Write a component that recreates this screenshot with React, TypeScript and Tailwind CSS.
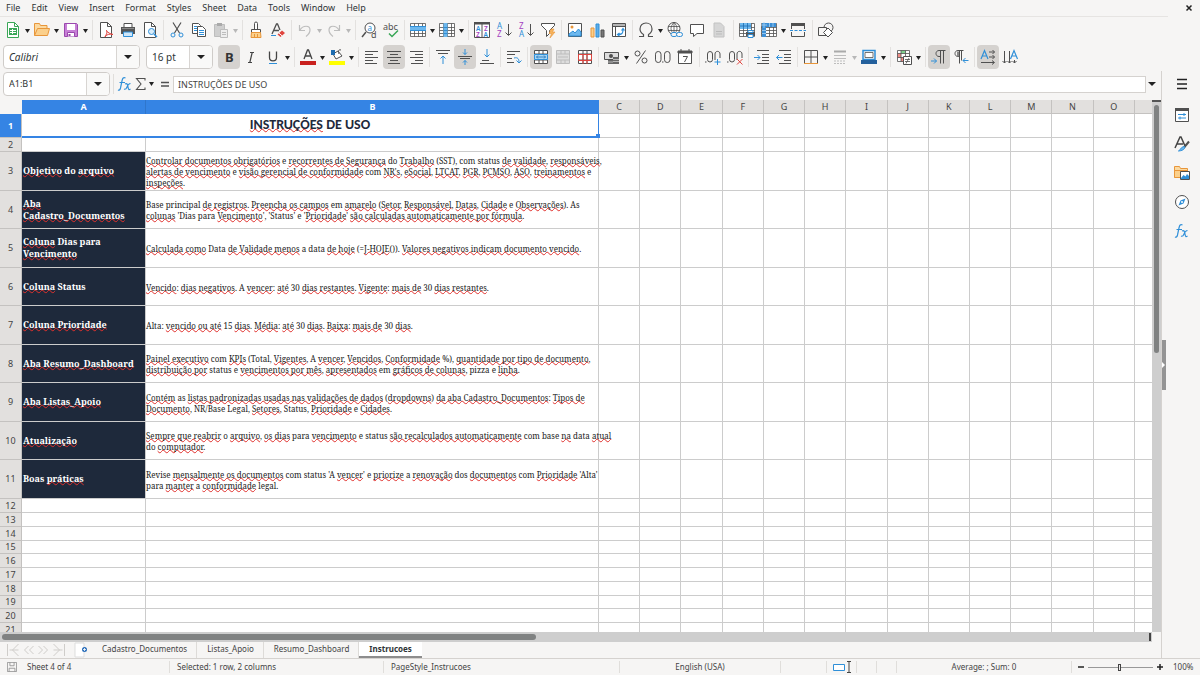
import { Fragment, useState } from "react";
import type { ReactNode } from "react";

const INK = "#505050";
const BLUE = "#2f8fd8";
const PALE = "#bdbdbd";
const ORANGE = "#e8963a";
const RED = "#e0453f";
const GREEN = "#3aa757";

const grid = "M.5 1.500h15v13H.5zM.5 5.500h15M.5 8.500h15M.5 11.500h15M4.500 1.500v13M8.500 1.500v13M12.500 1.500v13";

const ICONS: Record<string, ReactNode> = {
  new: (
    <>
      <path d="M2.500.5h7l4 4v11h-11z" fill="#fff" stroke={GREEN} />
      <path d="M9.500.5v4h4" fill="none" stroke={GREEN} />
      <path d="M4 6h8v7H4z" fill={GREEN} />
      <path d="M5 8.500h6M5 10.500h6M7.500 7v5" stroke="#fff" />
    </>
  ),
  open: (
    <>
      <path d="M.5 13.500v-12h5l1 2h6.500v3" fill="#fbd9a0" stroke={ORANGE} />
      <path d="M.5 13.500l3-7h12l-2 7z" fill="#fbd08c" stroke={ORANGE} />
    </>
  ),
  save: (
    <>
      <path d="M1.500 1.500h12l1 1v12h-13z" fill="#c77fd6" stroke="#9a48ad" />
      <path d="M4 2h8v6H4z" fill="#fff" />
      <path d="M4.500 14.500v-4h7v4" fill="#fff" stroke="#9a48ad" />
      <path d="M5.500 12h2v2h-2z" fill="#9a48ad" />
    </>
  ),
  pdf: (
    <>
      <path d="M2.500.5h7l4 4v11h-11z" fill="#fff" stroke={INK} />
      <path d="M9.500.5v4h4" fill="none" stroke={INK} />
      <path d="M8 8.500c2 0 1 3-1 6.500 1-2.500 5-3.500 8-2.500-3-.5-5-2-7-4z" fill="#fff" stroke={RED} />
    </>
  ),
  print: (
    <>
      <path d="M4 1.500h8v4H4z" fill="#fff" stroke={INK} />
      <path d="M1 5h14v7H1z" fill="#555" />
      <path d="M2 6.500h12" stroke="#8a8a8a" />
      <path d="M3.500 10h9v4.500h-9z" fill="#cfe6f8" stroke={BLUE} />
    </>
  ),
  preview: (
    <>
      <path d="M2.500.5h7l4 4v11h-11z" fill="#fff" stroke={INK} />
      <path d="M9.500.5v4h4" fill="none" stroke={INK} />
      <circle cx="9.500" cy="9.500" r="3" fill="#d8ecfa" stroke={BLUE} />
      <path d="M12 12l3 3" stroke={BLUE} strokeWidth="1.500" />
    </>
  ),
  cut: (
    <>
      <path d="M4 .5l6.500 10.500M12 .5L5.500 11" stroke={INK} fill="none" strokeWidth="1.200" />
      <circle cx="4" cy="13" r="2" fill="none" stroke={BLUE} />
      <circle cx="12" cy="13" r="2" fill="none" stroke={BLUE} />
    </>
  ),
  copy: (
    <>
      <path d="M1.500 1.500h6l2 2v8h-8z" fill="#fff" stroke={INK} />
      <path d="M6.500 4.500h5l3 3v7h-8z" fill="#fff" stroke={INK} />
      <path d="M3 4.500h3M3 6.500h3M3 8.500h3M8 8.500h5M8 10.500h5M8 12.500h5" stroke={BLUE} />
    </>
  ),
  paste: (
    <>
      <path d="M1.500 2.500h10v12h-10z" fill="#cfcfcf" stroke={PALE} />
      <path d="M4 1h5v3H4z" fill="#aaa" />
      <path d="M7.500 7.500h7v8h-7z" fill="#eee" stroke={PALE} />
      <path d="M9 10.500h4M9 12.500h4" stroke={PALE} />
    </>
  ),
  clone: (
    <>
      <path d="M6.500 1.500a1.500 1.500 0 013 0v6h-3z" fill="#fff" stroke={INK} />
      <path d="M3.500 7.500h9v3h-9z" fill="#fff" stroke={INK} />
      <path d="M3.500 10.500h9l.5 5H3z" fill="#fbd08c" stroke={ORANGE} />
      <path d="M6.500 12v3M9.500 12v3" stroke={ORANGE} />
    </>
  ),
  clear: (
    <>
      <path d="M2 12L6.500 2h1L10 8M4 8.500h5" fill="none" stroke={INK} strokeWidth="1.300" />
      <path d="M1 13.500h5" stroke={BLUE} />
      <path d="M7.500 12.500L12 8.500l3 2.500-4.500 4z" fill={RED} />
      <path d="M9 11.200l3 2.600" stroke="#fff" />
    </>
  ),
  undo: <path d="M2.500 3v5.500H8M3 8c3-5 10-5 10 0 0 3-2 5-4 6.500" fill="none" stroke={PALE} strokeWidth="1.200" />,
  redo: <path d="M13.500 3v5.500H8M13 8C10 3 3 3 3 8c0 3 2 5 4 6.500" fill="none" stroke={PALE} strokeWidth="1.200" />,
  find: (
    <>
      <circle cx="9" cy="6" r="5" fill="#fff" stroke={INK} />
      <path d="M5 10l-4 5" stroke={INK} strokeWidth="1.500" />
      <text x="6.500" y="8.500" fontSize="8" fill={BLUE} fontFamily="Noto Sans">a</text>
      <text x="10" y="15.500" fontSize="9" fill={INK} fontFamily="Noto Sans">d</text>
    </>
  ),
  spell: (
    <>
      <text x="0" y="8" fontSize="9" fill={INK} fontFamily="Noto Sans">abc</text>
      <path d="M6 11.500l3 3 6-6" fill="none" stroke={GREEN} strokeWidth="1.500" />
    </>
  ),
  row: (
    <>
      <path d={grid} fill="#fff" stroke={INK} strokeWidth=".8" />
      <path d="M0 4.500h16v4H0z" fill="#6db8ee" />
      <path d="M0 4.500h16M0 8.500h16" stroke={BLUE} />
    </>
  ),
  column: (
    <>
      <path d={grid} fill="#fff" stroke={INK} strokeWidth=".8" />
      <path d="M4.500 1h4v14h-4z" fill="#6db8ee" />
      <path d="M4.500 5.500h4M4.500 8.500h4M4.500 11.500h4" stroke={BLUE} />
    </>
  ),
  sort: (
    <>
      <path d="M.5.5h15v15H.5zM8 2v13" fill="#fff" stroke={INK} />
      <path d="M0 0h16v2.500H0z" fill={INK} />
      <g fontSize="6.500" fontFamily="Noto Sans" fontWeight="600">
        <text x="2" y="9" fill={BLUE}>A</text>
        <text x="2" y="15" fill="#a43fc0">Z</text>
        <text x="10" y="9" fill="#a43fc0">Z</text>
        <text x="9.500" y="15" fill={BLUE}>A</text>
      </g>
    </>
  ),
  asc: (
    <>
      <g fontSize="8" fontFamily="Noto Sans">
        <text x="1" y="7" fill={BLUE}>A</text>
        <text x="1" y="15" fill="#a43fc0">Z</text>
      </g>
      <path d="M12.500 2v11M9.500 10.500l3 3 3-3" fill="none" stroke={INK} />
    </>
  ),
  desc: (
    <>
      <g fontSize="8" fontFamily="Noto Sans">
        <text x="1" y="7" fill="#a43fc0">Z</text>
        <text x="1" y="15" fill={BLUE}>A</text>
      </g>
      <path d="M12.500 2v11M9.500 10.500l3 3 3-3" fill="none" stroke={INK} />
    </>
  ),
  filter: (
    <>
      <path d="M1.500 1.500h13v2l-5 5v3l-3 3v-6l-5-5z" fill="#fff" stroke={INK} />
      <path d="M11 7h3l-1.500 3H15l-5 6 1.500-4.500H9z" fill="#f7b35b" stroke={ORANGE} strokeWidth=".6" />
    </>
  ),
  image: (
    <>
      <path d="M1.500 1.500h13v13h-13z" fill="#fff" stroke={INK} />
      <circle cx="5" cy="5" r="1.500" fill={ORANGE} />
      <path d="M2 12l4-3 2 2 3.500-4L14 10v4H2z" fill="#6db8ee" stroke={BLUE} />
    </>
  ),
  chart: (
    <>
      <path d="M2 6h3v9H2z" fill="#fbd08c" stroke={ORANGE} />
      <path d="M7 2h3v13H7z" fill="#5faee8" stroke={BLUE} />
      <path d="M12 8h3v7h-3z" fill="#777" stroke={INK} />
    </>
  ),
  pivot: (
    <>
      <path d="M1.500 1.500h13v13h-13zM1.500 4.500h13M4.500 1.500v13" fill="#fff" stroke={INK} />
      <path d="M2 2h12v2H2z" fill="#b5b5b5" />
      <path d="M7 12.500c4 0 5-1 5-5M10.500 8.500l1.500-2 1.500 2M8.500 11L6.500 12.500l2 1.500" fill="none" stroke={BLUE} strokeWidth="1.200" />
    </>
  ),
  omega: <path d="M1 14.500h4.500v-2C3 11 2 9 2 7c0-3.500 2.500-6 6-6s6 2.500 6 6c0 2-1 4-3.500 5.500v2H15" fill="none" stroke={INK} strokeWidth="1.200" />,
  link: (
    <>
      <circle cx="7" cy="6.500" r="6" fill="#fff" stroke={INK} />
      <path d="M1 4.500h12M1 8.500h12M7 .5v12M7 .5c-4 4-4 8 0 12M7 .5c4 4 4 8 0 12" fill="none" stroke={INK} strokeWidth=".8" />
      <rect x="4" y="10.500" width="6" height="4" rx="2" fill="#f6f5f4" stroke={BLUE} />
      <rect x="9.500" y="10.500" width="6" height="4" rx="2" fill="#f6f5f4" stroke={BLUE} />
    </>
  ),
  comment: <path d="M1.500 2.500h13v9H8l-3.500 3v-3h-3z" fill="#fff" stroke={INK} />,
  header: (
    <>
      <path d="M3 1h6.500L13 4.500V15H3z" fill="#d6d6d6" stroke="#c2c2c2" />
      <path d="M5 9.500h6M5 12h6" stroke="#bbb" />
    </>
  ),
  printarea: (
    <>
      <path d={grid} fill="#fff" stroke={INK} strokeWidth=".8" />
      <path d="M1 1h11v6H1z" fill="#6db8ee" />
      <path d="M1 4h11M4.500 1v6M8.500 1v6" stroke="#1d6cb0" strokeWidth=".8" />
      <path d="M7 10h9v4H7z" fill="#555" />
      <path d="M9 8.500h5v2H9zM9 12.500h5v3H9z" fill="#fff" stroke={BLUE} />
    </>
  ),
  freeze: (
    <>
      <path d={grid} fill="#fff" stroke={INK} strokeWidth=".8" />
      <path d="M1 1h14v4H5v10H1z" fill="#3c8fd6" />
      <path d="M1 8.500h4M1 11.500h4M8.500 1v4M12 1v4M3 0v6M0 3h6" stroke="#a9d4f5" strokeWidth=".8" />
    </>
  ),
  split: (
    <>
      <path d="M1.500 7V1.500h13V7M1.500 10v4.500h13V10" fill="none" stroke={INK} />
      <path d="M1 1h14v3H1z" fill={INK} />
      <path d="M0 8.500h16" stroke={BLUE} strokeDasharray="3 1.500" />
    </>
  ),
  shapes: (
    <>
      <circle cx="10.500" cy="5.500" r="4.500" fill="#f6f5f4" stroke={INK} />
      <path d="M.5 5.500h8v8h-8z" fill="#f6f5f4" stroke={INK} />
      <path d="M10 6l4.500 4.500L10 15l-4.500-4.500z" fill="#fff" stroke={INK} />
    </>
  ),
  left: <path d="M1 2.500h13M1 5.500h8M1 8.500h13M1 11.500h8M1 14.500h12" stroke={INK} />,
  center: <path d="M1 2.500h14M4 5.500h8M1 8.500h14M4 11.500h8M2 14.500h12" stroke={INK} />,
  right: <path d="M2 2.500h13M7 5.500h8M2 8.500h13M7 11.500h8M3 14.500h12" stroke={INK} />,
  top: (
    <>
      <path d="M1 1.500h14M3 4.500h10" stroke={INK} />
      <path d="M8 15V7M5.500 9.500L8 7l2.500 2.500" fill="none" stroke={BLUE} />
    </>
  ),
  middle: (
    <>
      <path d="M1 7.500h14M3 9.500h10" stroke={INK} />
      <path d="M8 0v5.500M6 3.500l2 2 2-2M8 16v-4.500M6 13.500l2-2 2 2" fill="none" stroke={BLUE} />
    </>
  ),
  bottom: (
    <>
      <path d="M1 14.500h14M3 11.500h7" stroke={INK} />
      <path d="M8 0v8M5.500 5.500L8 8l2.500-2.500" fill="none" stroke={BLUE} />
    </>
  ),
  wrap: (
    <>
      <path d="M1 2.500h13M1 5.500h8M1 9.500h5M1 13.500h7" stroke={INK} />
      <path d="M8 9c4-1 5 1 5 4.500M10.500 11.500l2.500 2.500 2.500-2.500" fill="none" stroke={BLUE} />
    </>
  ),
  merge: (
    <>
      <path d="M1.500 1.500h13v13h-13zM1.500 5h13M1.500 11h13M6 1.500V5M10 1.500V5M6 11v3.500M10 11v3.500" fill="#fff" stroke={INK} />
      <path d="M1 5h14v6H1z" fill="#a5d6f7" />
      <path d="M1.500 5.500h13v5h-13z" fill="none" stroke={BLUE} />
      <path d="M3.500 8h9M5 6.500L3.500 8 5 9.500M11 6.500L12.500 8 11 9.500" fill="none" stroke="#1d6cb0" strokeWidth=".8" />
    </>
  ),
  unmerge: (
    <>
      <path d="M1.500 1.500h13v13h-13zM1.500 5h13M1.500 11h13M6 1.500V5M10 1.500V5M6 11v3.500M10 11v3.500" fill="#ddd" stroke={PALE} />
      <path d="M3 8h10" stroke={PALE} />
    </>
  ),
  splitcells: (
    <>
      <path d="M1.500 1.500h13v13h-13zM1.500 5h13M6 1.500v13M10 1.500v13M1.500 11h13" fill="#fff" stroke={INK} />
      <path d="M1.500 5.500h13v6h-13zM6 5v7M10 5v7M6 12v3M10 12v3" fill="none" stroke={RED} />
    </>
  ),
  currency: (
    <>
      <path d="M.5 3.500h14v7H.5z" fill="#ddd" stroke={INK} />
      <circle cx="7" cy="7" r="2" fill={INK} />
      <path d="M4 11h5v4H4zM9 8h6v7H9z" fill="#666" />
      <path d="M9 10.500h6M9 12.500h6M4 13h5" stroke="#ddd" strokeWidth=".7" />
    </>
  ),
  percent: (
    <>
      <circle cx="4.500" cy="4.500" r="2.500" fill="none" stroke={INK} />
      <circle cx="11.500" cy="11.500" r="2.500" fill="none" stroke={INK} />
      <path d="M12.500 1.500l-9 13" stroke={INK} />
    </>
  ),
  number: (
    <>
      <rect x=".5" y="2.500" width="5.500" height="11" rx="2.700" fill="none" stroke={INK} />
      <rect x="9.500" y="2.500" width="5.500" height="11" rx="2.700" fill="none" stroke={INK} />
      <path d="M7 13h1.500" stroke={INK} />
    </>
  ),
  date: (
    <>
      <path d="M1.500 2.500h13v12h-13z" fill="#fff" stroke={INK} />
      <path d="M1 2h14v2H1zM4 0v3M12 0v3" fill={INK} stroke={INK} />
      <path d="M6 7.500h4.500L7.500 13" fill="none" stroke={INK} />
    </>
  ),
  adddec: (
    <>
      <path d="M0 13h1.500" stroke={INK} />
      <rect x="2.500" y="2.500" width="5" height="10.500" rx="2.500" fill="none" stroke={INK} />
      <path d="M10 11V5c0-3.500 5-3.500 5 0v4" fill="none" stroke={INK} />
      <path d="M12.500 10v6M9.500 13h6" stroke={BLUE} />
    </>
  ),
  deldec: (
    <>
      <path d="M0 13h1.500" stroke={INK} />
      <rect x="2.500" y="2.500" width="5" height="10.500" rx="2.500" fill="none" stroke={INK} />
      <path d="M10 11V5c0-3.500 5-3.500 5 0v4" fill="none" stroke={INK} />
      <path d="M10 10l5.500 5.500M15.500 10L10 15.500" stroke={RED} />
    </>
  ),
  indent: (
    <>
      <path d="M3 1.500h12M8 5.500h7M8 8.500h7M8 11.500h7M3 14.500h12" stroke={INK} />
      <path d="M0 8.500h6M3.500 6L6 8.500 3.500 11" fill="none" stroke={BLUE} />
    </>
  ),
  outdent: (
    <>
      <path d="M3 1.500h12M8 5.500h7M8 8.500h7M8 11.500h7M3 14.500h12" stroke={INK} />
      <path d="M6.500 8.500h-6M3 6L.5 8.500 3 11" fill="none" stroke={BLUE} />
    </>
  ),
  borders: (
    <>
      <path d="M1.500 14.500v-13h13v13M8 2v12M2 8h12" fill="none" stroke={INK} />
      <path d="M1 14.500h14" stroke={ORANGE} />
    </>
  ),
  linestyle: (
    <>
      <path d="M2 2.500h12" stroke="#aaa" strokeWidth="2" />
      <path d="M2 6.500h12M2 9.500h12" stroke={PALE} />
      <path d="M2 12h12M2 14.500h12" stroke={PALE} strokeDasharray="2 1" />
    </>
  ),
  bordercolor: (
    <>
      <path d="M2 1.500h12v9H2z" fill="#f4f4f4" stroke={BLUE} strokeWidth="1.500" />
      <path d="M4 3.500h8v5H4z" fill="#fff" stroke={INK} strokeWidth=".8" />
      <path d="M0 11h16v4H0z" fill="#24609c" />
    </>
  ),
  conditional: (
    <>
      <path d="M1.500 1.500h12v11h-12z" fill="#fff" />
      <path d="M5 1.500h4.500v3H5z" fill="#7fd08e" />
      <path d="M1.500 4.500H5v4H1.500zM5 8.500h3v4H5z" fill="#f08a84" />
      <path d="M1.500 1.500h12v11h-12zM1.500 4.500h12M1.500 8.500h12M5 1.500v11M9.500 1.500v11" fill="none" stroke={INK} strokeWidth=".8" />
      <path d="M7.500 7.500h8v8h-8z" fill="#fff" stroke={INK} />
      <path d="M9 10.500h5M9 12.500h5M13 9l-3 5.500" stroke={INK} strokeWidth=".8" />
    </>
  ),
  ltr: (
    <>
      <path d="M14.500 1.500H8c-4 0-4 6 0 6h1M9.500 1.500v13M12.500 1.500v13" fill="none" stroke={INK} />
      <path d="M0 12h5.500M3 9.500L5.500 12 3 14.500" fill="none" stroke={BLUE} />
    </>
  ),
  rtl: (
    <>
      <path d="M10.500 1.500H5c-4 0-4 6 0 6h1M6.500 1.500v13M8.500 1.500v10" fill="none" stroke={INK} />
      <path d="M4 2.500h2v5H4z" fill="#888" />
      <path d="M15.500 11.500H10M12.500 9L10 11.500l2.500 2.500" fill="none" stroke={BLUE} />
    </>
  ),
  horizontal: (
    <>
      <path d="M1 10L4.500 1.500 8 10M2.500 7h4" fill="none" stroke={BLUE} strokeWidth="1.200" />
      <path d="M9 3h5.500M9 8h5.500M1 13.500h13M12.500 1l2 2-2 2M12.500 6l2 2-2 2M12 11.500l2.500 2-2.500 2" fill="none" stroke={INK} />
    </>
  ),
  vertical: (
    <>
      <path d="M2.500 2v12M7.500 2v12M12.500 11v3M.5 12l2 2 2-2M5.500 12l2 2 2-2M10.500 12l2 2 2-2" fill="none" stroke={INK} />
      <path d="M8.500 10L12 1.500 15.500 10M10 7h4" fill="none" stroke={BLUE} strokeWidth="1.200" />
    </>
  ),
  bold: (
    <text x="4" y="13" fontSize="13" fontWeight="700" fill="#333" fontFamily="Noto Sans">B</text>
  ),
  italic: <path d="M7 3.500h4M5 13.500h4M9.200 3.500l-2.400 10" fill="none" stroke="#444" strokeWidth="1.200" />,
  underlined: (
    <>
      <path d="M4.500 2.500v6c0 4.500 7 4.500 7 0v-6" fill="none" stroke="#444" strokeWidth="1.300" />
      <path d="M4 14.500h8" stroke={BLUE} />
    </>
  ),
  fontcolor: (
    <>
      <path d="M4 10L7.500 1h1L12 10M5.500 7h5" fill="none" stroke="#444" strokeWidth="1.300" />
      <path d="M0 12h16v4H0z" fill="#c9211e" />
    </>
  ),
  highlight: (
    <>
      <path d="M4 5l5-3 4 5-6 3z" fill="#fff" stroke={INK} />
      <path d="M2 1h4v5H2z" fill="#1d6cb0" />
      <path d="M12 1c-3-1-3 2-2 4" fill="none" stroke={INK} />
      <path d="M0 12h16v4H0z" fill="#ffff00" />
    </>
  ),
  menu: <path d="M3 3.500h10M3 8h10M3 12.500h10" stroke="#222" strokeWidth="1.500" />,
  properties: (
    <>
      <path d="M1.500 1.500h13v13h-13z" fill="#fff" stroke={INK} />
      <path d="M1 1h14v3H1z" fill={INK} />
      <path d="M4 7.500h8M4 11h8M10 6v3M6 9.500v3" stroke={BLUE} />
    </>
  ),
  styles: (
    <>
      <path d="M1 12L6 1h1l4 9M3 8h6" fill="none" stroke="#444" strokeWidth="1.500" />
      <path d="M15 5.500l-5 6" stroke={INK} strokeWidth="2" />
      <path d="M10.500 10.500c1 1 0 4-6 4.500 2-1 2-4 6-4.500z" fill="#6db8ee" stroke={BLUE} />
    </>
  ),
  gallery: (
    <>
      <path d="M.5 12.500v-11h5l1 2h7v3" fill="#fbd9a0" stroke={ORANGE} />
      <path d="M.5 12.500v-7H13v7z" fill="#fbd08c" stroke={ORANGE} />
      <path d="M6.500 6.500h9v8h-9z" fill="#fff" stroke={INK} />
      <path d="M7 13l2.500-3 2 1.500L13 9l2 2v3H7z" fill={BLUE} />
    </>
  ),
  navigator: (
    <>
      <circle cx="8" cy="8" r="6.500" fill="#fff" stroke={INK} />
      <path d="M11.500 4.500L9.500 9.500l-5 2 2-5z" fill={BLUE} />
      <circle cx="8" cy="8" r="1" fill="#fff" />
    </>
  ),
  fx: (
    <>
      <path d="M8.500 2c-2-1-3 0-3.500 3L3.500 12c-.5 2-1.500 2.500-2.500 2M2.500 6.500H8" fill="none" stroke={BLUE} strokeWidth="1.200" />
      <path d="M8 8c2-1 2.500 0 3 3s1 3 2.500 2M13.500 7.500c-2 0-2.500 1-3.500 3.500s-1.500 2.500-3 2" fill="none" stroke={BLUE} strokeWidth="1.200" />
    </>
  ),
  sum: <path d="M12 4.500V2.500H3.500L8 8l-4.500 5.500H12v-2" fill="none" stroke={INK} strokeWidth="1.100" />,
  equals: <path d="M4 6.500h8M4 10h8" stroke={INK} strokeWidth="1.600" />,
};

type Tool = { icon: string; label: string; drop?: boolean; on?: boolean; off?: boolean };

const STANDARD: Tool[][] = [
  [
    { icon: "new", label: "New", drop: true },
    { icon: "open", label: "Open", drop: true },
    { icon: "save", label: "Save", drop: true },
  ],
  [
    { icon: "pdf", label: "Export as PDF" },
    { icon: "print", label: "Print" },
    { icon: "preview", label: "Print Preview" },
  ],
  [
    { icon: "cut", label: "Cut" },
    { icon: "copy", label: "Copy" },
    { icon: "paste", label: "Paste", drop: true, off: true },
  ],
  [
    { icon: "clone", label: "Clone Formatting" },
    { icon: "clear", label: "Clear Formatting" },
  ],
  [
    { icon: "undo", label: "Undo", drop: true, off: true },
    { icon: "redo", label: "Redo", drop: true, off: true },
  ],
  [
    { icon: "find", label: "Find and Replace" },
    { icon: "spell", label: "Spelling" },
  ],
  [
    { icon: "row", label: "Row", drop: true },
    { icon: "column", label: "Column", drop: true },
  ],
  [
    { icon: "sort", label: "Sort" },
    { icon: "asc", label: "Sort Ascending" },
    { icon: "desc", label: "Sort Descending" },
    { icon: "filter", label: "AutoFilter" },
  ],
  [
    { icon: "image", label: "Insert Image" },
    { icon: "chart", label: "Insert Chart" },
    { icon: "pivot", label: "Pivot Table" },
  ],
  [
    { icon: "omega", label: "Special Character", drop: true },
    { icon: "link", label: "Hyperlink" },
    { icon: "comment", label: "Insert Comment" },
    { icon: "header", label: "Headers and Footers", off: true },
  ],
  [
    { icon: "printarea", label: "Define Print Area" },
    { icon: "freeze", label: "Freeze Rows and Columns", drop: true },
    { icon: "split", label: "Split Window" },
  ],
  [{ icon: "shapes", label: "Show Draw Functions" }],
];

const FORMATTING: Tool[][] = [
  [
    { icon: "bold", label: "Bold", on: true },
    { icon: "italic", label: "Italic" },
    { icon: "underlined", label: "Underline", drop: true },
  ],
  [
    { icon: "fontcolor", label: "Font Color", drop: true },
    { icon: "highlight", label: "Background Color", drop: true },
  ],
  [
    { icon: "left", label: "Align Left" },
    { icon: "center", label: "Center Horizontally", on: true },
    { icon: "right", label: "Align Right" },
  ],
  [
    { icon: "top", label: "Align Top" },
    { icon: "middle", label: "Center Vertically", on: true },
    { icon: "bottom", label: "Align Bottom" },
  ],
  [{ icon: "wrap", label: "Wrap Text" }],
  [
    { icon: "merge", label: "Merge and Center Cells", on: true },
    { icon: "unmerge", label: "Merge Cells", off: true },
    { icon: "splitcells", label: "Unmerge Cells" },
  ],
  [
    { icon: "currency", label: "Format as Currency", drop: true },
    { icon: "percent", label: "Format as Percent" },
    { icon: "number", label: "Format as Number" },
    { icon: "date", label: "Format as Date" },
  ],
  [
    { icon: "adddec", label: "Add Decimal Place" },
    { icon: "deldec", label: "Delete Decimal Place" },
  ],
  [
    { icon: "indent", label: "Increase Indent" },
    { icon: "outdent", label: "Decrease Indent" },
  ],
  [
    { icon: "borders", label: "Borders", drop: true },
    { icon: "linestyle", label: "Border Style", drop: true, off: true },
    { icon: "bordercolor", label: "Border Color", drop: true },
  ],
  [{ icon: "conditional", label: "Conditional", drop: true }],
  [
    { icon: "ltr", label: "Left-To-Right", on: true },
    { icon: "rtl", label: "Right-To-Left" },
  ],
  [
    { icon: "horizontal", label: "Text direction from left to right", on: true },
    { icon: "vertical", label: "Text direction from top to bottom" },
  ],
];

const SIDEBAR = [
  { icon: "properties", label: "Properties" },
  { icon: "styles", label: "Styles" },
  { icon: "gallery", label: "Gallery" },
  { icon: "navigator", label: "Navigator" },
  { icon: "fx", label: "Functions" },
];

const MENUS = ["File", "Edit", "View", "Insert", "Format", "Styles", "Sheet", "Data", "Tools", "Window", "Help"];
const COLUMNS = ["C", "D", "E", "F", "G", "H", "I", "J", "K", "L", "M", "N", "O"];
const SHEETS = ["Cadastro_Documentos", "Listas_Apoio", "Resumo_Dashboard", "Instrucoes"];

// Words flagged by the spell checker are wrapped in {braces}
const ROWS = [
  {
    title: "{Objetivo} do {arquivo}",
    text: "{Controlar documentos obrigatórios} e {recorrentes de Segurança} do {Trabalho} (SST), com status {de validade}, {responsáveis},\n{alertas de vencimento} e {visão gerencial de conformidade} com {NR's}, {eSocial}, {LTCAT}, {PGR}, {PCMSO}, {ASO}, {treinamentos} e\n{inspeções}.",
  },
  {
    title: "{Aba}\n{Cadastro_Documentos}",
    text: "Base principal {de registros}. {Preencha os campos} em {amarelo} ({Setor}, {Responsável}, {Datas}, {Cidade} e {Observações}). As\n{colunas} 'Dias para {Vencimento}', 'Status' e '{Prioridade}' {são calculadas automaticamente por fórmula}.",
  },
  {
    title: "{Coluna} Dias para\n{Vencimento}",
    text: "{Calculada como} Data {de Validade menos} a data {de hoje} (={J-HOJE}()). {Valores negativos indicam documento vencido}.",
  },
  {
    title: "{Coluna} Status",
    text: "{Vencido}: {dias negativos}. A {vencer}: {até} 30 {dias restantes}. {Vigente}: {mais de} 30 {dias restantes}.",
  },
  {
    title: "{Coluna Prioridade}",
    text: "Alta: {vencido ou até} 15 {dias}. {Média}: {até} 30 {dias}. {Baixa}: {mais de} 30 {dias}.",
  },
  {
    title: "{Aba Resumo_Dashboard}",
    text: "{Painel executivo} com {KPIs} (Total, {Vigentes}, A {vencer}, {Vencidos}, {Conformidade} %), {quantidade por tipo de documento},\n{distribuição por} status e {vencimentos por mês}, {apresentados} em {gráficos de colunas}, pizza e {linha}.",
  },
  {
    title: "{Aba Listas_Apoio}",
    text: "{Contém} as {listas padronizadas usadas nas validações de dados} ({dropdowns}) {da aba Cadastro_Documentos}: {Tipos de}\n{Documento}, NR/Base Legal, {Setores}, Status, {Prioridade} e {Cidades}.",
  },
  {
    title: "{Atualização}",
    text: "{Sempre que reabrir} o {arquivo}, {os dias} para {vencimento} e status {são recalculados automaticamente} com base {na} data {atual}\ndo {computador}.",
  },
  {
    title: "Boas {práticas}",
    text: "Revise {mensalmente os documentos} com status 'A {vencer}' e {priorize} a {renovação} dos {documentos} com {Prioridade} 'Alta'\npara {manter} a {conformidade} legal.",
  },
];

function Icon({ name }: { name: string }) {
  return (
    <svg viewBox="0 0 16 16" className="w-4 h-4 shrink-0 overflow-visible" aria-hidden="true">
      {ICONS[name]}
    </svg>
  );
}

function Caret({ off, big }: { off?: boolean; big?: boolean }) {
  return (
    <svg viewBox="0 0 8 4" className={`${big ? "w-2" : "w-[5px]"} h-1 shrink-0`} preserveAspectRatio="none" aria-hidden="true">
      <path d="M0 0h8L4 4z" fill={off ? "#b8b8b8" : "#222"} />
    </svg>
  );
}

function Toolbar({ groups, label }: { groups: Tool[][]; label: string }) {
  return (
    <div role="toolbar" aria-label={label} className="flex items-center">
      {groups.map((group, i) => (
        <Fragment key={i}>
          {i > 0 && <span className="w-px h-5 mx-0.5 bg-[#e3e1df]" />}
          <div className={`flex items-center ${group.some((t) => t.drop) ? "pr-px" : ""}`}>
            {group.map((tool) => (
              <Fragment key={tool.icon}>
                <button
                  aria-label={tool.label}
                  aria-pressed={tool.on}
                  disabled={tool.off}
                  className={`w-[22px] h-6 flex items-center justify-center rounded-sm ${tool.on ? "bg-[#d5d2cf]" : ""}`}
                >
                  <Icon name={tool.icon} />
                </button>
                {tool.drop && (
                  <button aria-label={`${tool.label} options`} disabled={tool.off} className="w-[7px] h-6 pt-0.5 flex items-center justify-center">
                    <Caret off={tool.off} />
                  </button>
                )}
              </Fragment>
            ))}
          </div>
        </Fragment>
      ))}
    </div>
  );
}

function Combo({ label, value, className }: { label: string; value: string; className: string }) {
  return (
    <div className={`flex h-6 shrink-0 border border-[#cfccc9] rounded-sm bg-white overflow-hidden ${className}`}>
      <input aria-label={label} defaultValue={value} className="flex-1 min-w-0 pl-[5px] text-[#2e3436] outline-none" />
      <button aria-label={`${label} list`} className="w-[23px] flex items-center justify-center border-l border-[#d8d5d2] bg-[#f9f9f8]">
        <Caret big />
      </button>
    </div>
  );
}

function Spelled({ text }: { text: string }) {
  return (
    <>
      {text.split(/[{}]/).map((part, i) =>
        i % 2 === 1 ? (
          <span key={i} className="underline decoration-wavy decoration-1 decoration-[#e0302c] -underline-offset-1 [text-decoration-skip-ink:none]">
            {part}
          </span>
        ) : (
          part
        )
      )}
    </>
  );
}

function RowHead({ n, active }: { n: number; active?: boolean }) {
  return (
    <th
      scope="row"
      className={`p-0 text-[9px] leading-3 border-r border-b border-[#c4c2c0] ${
        active ? "bg-[#3584e4] text-white font-bold" : "bg-[#e2e0de] text-[#444] font-normal"
      }`}
    >
      {n}
    </th>
  );
}

const CELL = "p-0 border-r border-b border-[#cccccc]";

function EmptyCells() {
  return (
    <>
      {COLUMNS.map((c) => (
        <td key={c} className={CELL} />
      ))}
      <td className="p-0 border-b border-[#cccccc]" />
    </>
  );
}

function SheetTable() {
  return (
    <table className="w-full table-fixed border-separate border-spacing-0 bg-white">
      <colgroup>
        <col className="w-[22px]" />
        <col className="w-[124px]" />
        <col className="w-[453px]" />
        {COLUMNS.map((c) => (
          <col key={c} />
        ))}
        <col className="w-[17px]" />
      </colgroup>
      <thead>
        <tr className="h-3.5 text-[9px] leading-3">
          <td className="p-0 bg-[#f6f5f4]" />
          <th className="p-0 bg-[#3584e4] text-white border-r border-[#2f76cc]">A</th>
          <th className="p-0 bg-[#3584e4] text-white">B</th>
          {COLUMNS.map((c) => (
            <th key={c} className="p-0 font-normal bg-[#e2e0de] text-[#444] border-r border-b border-[#c4c2c0]">
              {c}
            </th>
          ))}
          <td className="p-0 bg-[#e2e0de] border-b border-[#c4c2c0]" />
        </tr>
      </thead>
      <tbody>
        <tr className="h-6">
          <RowHead n={1} active />
          <td
            colSpan={2}
            className="relative p-0 border-r border-b-2 border-[#3584e4] text-center font-['Carlito','Lato'] text-[14px] leading-[18px] font-bold text-[#1e293b]"
          >
            <Spelled text="{INSTRUÇÕES} DE USO" />
            <span className="absolute -right-0.5 -bottom-0.5 w-1 h-1 bg-[#3584e4]" />
          </td>
          <EmptyCells />
        </tr>
        <tr className="h-3.5">
          <RowHead n={2} />
          <td className={CELL} />
          <td className={CELL} />
          <EmptyCells />
        </tr>
        {ROWS.map((row, i) => (
          <tr key={i} className={i % 2 === 0 ? "h-[39px]" : "h-[38px]"}>
            <RowHead n={i + 3} />
            <td className={`${CELL} pl-px bg-[#1e293b] text-white font-bold whitespace-pre font-['Noto_Serif','DejaVu_Serif_Condensed','DejaVu_Serif',serif] text-[9px] leading-[12px]`}>
              <Spelled text={row.title} />
            </td>
            <td className={`${CELL} pt-px text-[#222] whitespace-pre font-['Noto_Serif_SemiCondensed','Droid_Serif','Noto_Serif','DejaVu_Serif_Condensed',serif] text-[8px] leading-[11px]`}>
              <Spelled text={row.text} />
            </td>
            <EmptyCells />
          </tr>
        ))}
        {Array.from({ length: 10 }, (_, i) => (
          <tr key={i} className={i % 4 === 3 ? "h-[13px]" : "h-3.5"}>
            <RowHead n={i + 12} />
            <td className={CELL} />
            <td className={CELL} />
            <EmptyCells />
          </tr>
        ))}
      </tbody>
    </table>
  );
}

function SheetTabs() {
  const [active, setActive] = useState("Instrucoes");
  return (
    <div className="flex items-stretch h-4 pl-1.5 text-[8px] text-[#444]">
      <div className="flex items-center w-[62px]">
        {[
          "M1 1v12M12 1L6 7l6 6M3 7h9",
          "M7 3L3 7l4 4M12 3L8 7l4 4",
          "M2 3l4 4-4 4M7 3l4 4-4 4",
          "M13 1v12M2 1l6 6-6 6M2 7h9",
        ].map((d, i) => (
          <button key={i} aria-label={["First sheet", "Previous sheet", "Next sheet", "Last sheet"][i]} className="w-[15px]">
            <svg viewBox="0 0 14 14" className="w-[15px] h-3.5" fill="none" stroke="#cfcdca" aria-hidden="true">
              <path d={d} />
            </svg>
          </button>
        ))}
      </div>
      <button aria-label="Add sheet" className="w-6 pl-1.5">
        <svg viewBox="0 0 14 16" className="w-3.5 h-4" aria-hidden="true">
          <path d="M1 1h9v14H1z" fill="#fff" stroke="#ddd" />
          <circle cx="10.500" cy="7.500" r="2.500" fill="#2a6ebb" />
          <path d="M10.500 6v3M9 7.500h3" stroke="#fff" strokeWidth=".8" />
        </svg>
      </button>
      <div role="tablist" className="flex">
        {SHEETS.map((s, i) => (
          <button
            key={s}
            role="tab"
            aria-selected={s === active}
            onClick={() => setActive(s)}
            className={`px-2.5 leading-[14px] border-b-2 ${
              s === active ? "bg-white font-bold text-[#2e3436] border-[#8d8d8d]" : "border-transparent"
            } ${i > 0 ? "shadow-[-1px_0_0_#dddbd8]" : ""}`}
          >
            {s}
          </button>
        ))}
      </div>
    </div>
  );
}

function StatusBar() {
  return (
    <footer className="flex items-center h-[17px] shrink-0 border-t border-[#d5d2cf] text-[8px] text-[#444]">
      <div className="w-[22px] pl-px flex justify-center">
        <svg viewBox="0 0 12 12" className="w-2.5 h-2.5" fill="none" stroke="#8f8f8f" aria-hidden="true">
          <path d="M.5.5h11v11H.5zM3.500.5v4h5v-4M2.500 11.500v-4h7v4" />
        </svg>
      </div>
      <div className="w-[148px] pl-[5px] border-r border-[#e0dedb]">Sheet 4 of 4</div>
      <div className="w-[214px] pl-[7px] border-r border-[#e0dedb]">Selected: 1 row, 2 columns</div>
      <div className="w-[236px] pl-[7px] border-r border-[#e0dedb]">PageStyle_Instrucoes</div>
      <div className="flex-1 text-center border-r border-[#e0dedb]">English (USA)</div>
      <div className="w-[46px] h-3 border-r border-[#e0dedb]" />
      <div className="w-[30px] h-3 flex items-center justify-center border-r border-[#e0dedb]">
        <svg viewBox="0 0 24 14" className="w-6 h-3.5" fill="none" aria-hidden="true">
          <path d="M3.500 4.500h11v6h-11z" stroke={BLUE} fill="#fff" />
          <path d="M17 1.500h4M17 12.500h4M19 2v10" stroke="#444" />
        </svg>
      </div>
      <div className="w-5 h-3 border-r border-[#e0dedb]" />
      <div className="w-5 h-3 border-r border-[#e0dedb]" />
      <div className="w-[175px] text-center border-r border-[#e0dedb]">Average: ; Sum: 0</div>
      <div className="flex items-center gap-[3px] pl-[5px] w-[101px]">
        <svg viewBox="0 0 8 8" className="w-2 h-2" aria-hidden="true">
          <path d="M1 4h6" stroke="#222" strokeWidth="1.500" />
        </svg>
        <input
          type="range"
          aria-label="Zoom"
          defaultValue={48}
          className="w-[65px] h-3 appearance-none bg-transparent [&::-webkit-slider-runnable-track]:h-px [&::-webkit-slider-runnable-track]:bg-[#999] [&::-webkit-slider-thumb]:appearance-none [&::-webkit-slider-thumb]:w-[3px] [&::-webkit-slider-thumb]:h-[7px] [&::-webkit-slider-thumb]:-mt-[3px] [&::-webkit-slider-thumb]:bg-[#eee] [&::-webkit-slider-thumb]:border [&::-webkit-slider-thumb]:border-[#444]"
        />
        <svg viewBox="0 0 8 8" className="w-2 h-2" aria-hidden="true">
          <path d="M1 4h6M4 1v6" stroke="#222" strokeWidth="1.500" />
        </svg>
      </div>
      <div className="w-[27px]">100%</div>
    </footer>
  );
}

export default function App() {
  return (
    <div className="h-screen flex flex-col overflow-hidden bg-[#f6f5f4] font-['Noto_Sans',sans-serif] text-[#2e3436]">
      <nav className="flex items-center h-[17px] shrink-0 mr-8 pl-1.5 gap-[11px] border-b border-[#e6e4e2] text-[9px] leading-4">
        {MENUS.map((m) => (
          <button key={m}>{m}</button>
        ))}
        <button aria-label="Close document" className="ml-auto -mr-[25px]">
          <svg viewBox="0 0 8 8" className="w-2 h-2" stroke="#222" strokeWidth="1.500" aria-hidden="true">
            <path d="M1.500 1.500l5 5M6.500 1.500l-5 5" />
          </svg>
        </button>
      </nav>

      <div className="flex items-center h-[26px] shrink-0 pl-0.5">
        <Toolbar groups={STANDARD} label="Standard" />
      </div>
      <div className="flex items-center h-7 shrink-0 pl-[3px]">
        <Combo label="Font Name" value="Calibri" className="w-[137px] mr-1.5 text-[10px] italic" />
        <Combo label="Font Size" value="16 pt" className="w-[67px] mr-[5px] text-[10px]" />
        <Toolbar groups={FORMATTING} label="Formatting" />
      </div>

      <div className="flex flex-1 min-h-0">
        <main className="flex flex-col flex-1 min-w-0 border-r border-[#d5d2cf]">
          <div className="flex items-center h-[29px] shrink-0 pl-[3px] pb-[3px]">
            <Combo label="Name Box" value="A1:B1" className="w-[107px] text-[9px]" />
            <span className="w-px h-5 mx-[3px] bg-[#e0dedb]" />
            <button aria-label="Function Wizard"><Icon name="fx" /></button>
            <button aria-label="Select Function" className="flex items-center">
              <Icon name="sum" />
              <Caret />
            </button>
            <button aria-label="Formula" className="ml-[3px]"><Icon name="equals" /></button>
            <input
              aria-label="Input line"
              defaultValue="INSTRUÇÕES DE USO"
              className="flex-1 min-w-0 h-[17px] px-1 border border-[#d5d2cf] bg-white text-[9px] text-[#444] outline-none"
            />
            <button aria-label="Expand formula bar" className="w-[15px] pl-0.5">
              <Caret big />
            </button>
          </div>

          <div className="flex flex-1 min-h-0">
            <div className="flex-1 min-w-0 overflow-hidden">
              <SheetTable />
            </div>
            <div className="w-[9px] bg-[#cecece] border-t-2 border-[#555] pt-[3px] px-0.5">
              <div className="h-[47%] rounded-full bg-[#808282]" />
            </div>
          </div>
          <div className="flex items-center h-[10px] shrink-0 mr-[9px] pl-0.5 bg-[#cecece]">
            <div className="w-[534px] h-1.5 rounded-full bg-[#808282]" />
            <span className="ml-auto mr-px w-0.5 h-2 bg-[#444]" />
          </div>
          <SheetTabs />
        </main>

        <aside className="flex w-[38px] shrink-0">
          <button aria-label="Hide sidebar" className="self-center w-1 h-[50px] bg-[#949494] flex items-center">
            <svg viewBox="0 0 4 6" className="w-1 h-1.5" aria-hidden="true">
              <path d="M0 0l3 3-3 3z" fill="#fff" />
            </svg>
          </button>
          <div className="flex flex-col items-center gap-[13px] flex-1 pt-[5px] pr-0.5">
            <button aria-label="Sidebar settings" className="pb-0.5"><Icon name="menu" /></button>
            {SIDEBAR.map((s) => (
              <button key={s.icon} aria-label={s.label}>
                <Icon name={s.icon} />
              </button>
            ))}
          </div>
        </aside>
      </div>

      <StatusBar />
    </div>
  );
}
